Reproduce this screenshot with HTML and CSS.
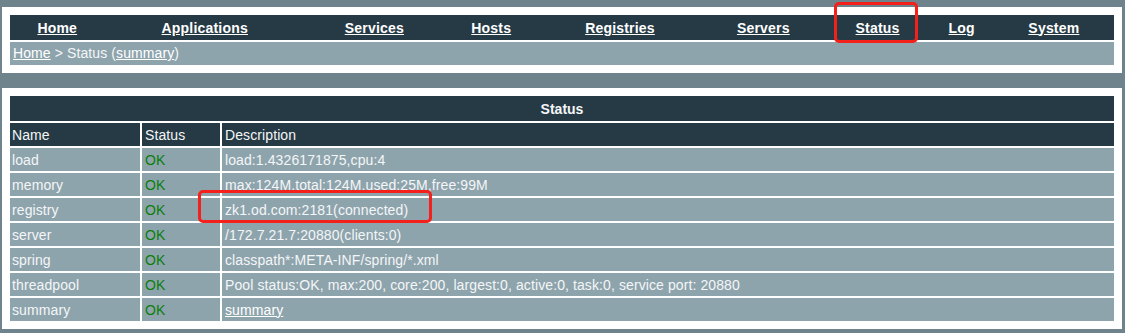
FILE: index.html
```html
<!DOCTYPE html>
<html lang="en">
<head>
    <meta charset="UTF-8">
    <title>Status</title>
    <link rel="stylesheet" href="styles.css">
</head>
<body>
    <div class="panel top-panel">
        <table class="menu">
            <tr>
                <td><a href="#">Home</a></td>
                <td><a href="#">Applications</a></td>
                <td><a href="#">Services</a></td>
                <td><a href="#">Hosts</a></td>
                <td><a href="#">Registries</a></td>
                <td><a href="#">Servers</a></td>
                <td><a href="#">Status</a></td>
                <td><a href="#">Log</a></td>
                <td><a href="#">System</a></td>
            </tr>
        </table>
        <div class="crumbs"><a href="#">Home</a> &gt; Status (<a href="#">summary</a>)</div>
    </div>

    <div class="panel list-panel">
        <table class="list">
            <tr>
                <th colspan="3">Status</th>
            </tr>
            <tr class="head">
                <td class="col-name">Name</td>
                <td class="col-status">Status</td>
                <td>Description</td>
            </tr>
            <tr>
                <td>load</td>
                <td class="ok">OK</td>
                <td>load:1.4326171875,cpu:4</td>
            </tr>
            <tr>
                <td>memory</td>
                <td class="ok">OK</td>
                <td>max:124M,total:124M,used:25M,free:99M</td>
            </tr>
            <tr>
                <td>registry</td>
                <td class="ok">OK</td>
                <td>zk1.od.com:2181(connected)</td>
            </tr>
            <tr>
                <td>server</td>
                <td class="ok">OK</td>
                <td>/172.7.21.7:20880(clients:0)</td>
            </tr>
            <tr>
                <td>spring</td>
                <td class="ok">OK</td>
                <td>classpath*:META-INF/spring/*.xml</td>
            </tr>
            <tr>
                <td>threadpool</td>
                <td class="ok">OK</td>
                <td>Pool status:OK, max:200, core:200, largest:0, active:0, task:0, service port: 20880</td>
            </tr>
            <tr>
                <td>summary</td>
                <td class="ok">OK</td>
                <td><a href="#">summary</a></td>
            </tr>
        </table>
    </div>

    <!-- red marks drawn over the screenshot -->
    <div class="mark mark-menu"></div>
    <div class="mark mark-registry"></div>
</body>
</html>
```

FILE: styles.css
```css
body {
    margin: 0;
    padding: 7px 3px 0 2px;
    background-color: #6e838c;
    font-family: "Liberation Sans", Arial, sans-serif;
    font-size: 14px;
    color: #f4f6f7;
    position: relative;
}

a {
    color: #ffffff;
    text-decoration: underline;
}

.panel {
    background-color: #ffffff;
}

.top-panel {
    padding: 8px;
    margin-bottom: 15px;
}

.list-panel {
    padding: 6px;
}

/* top menu */
.menu {
    width: 100%;
    height: 25px;
    border-collapse: collapse;
    background-color: #263a46;
}

.menu td {
    padding: 0 1px;
    text-align: center;
    font-weight: bold;
    letter-spacing: 0.2px;
    white-space: nowrap;
}

.crumbs {
    margin-top: 2px;
    height: 23px;
    line-height: 23px;
    padding-left: 3px;
    letter-spacing: 0.1px;
    background-color: #8ea4ad;
}

/* status list */
.list {
    width: 100%;
    border-spacing: 2px;
}

.list th {
    height: 25px;
    padding: 0;
    background-color: #263a46;
    font-weight: bold;
    text-align: center;
}

.list td {
    height: 23px;
    padding: 0 3px;
    background-color: #8ea4ad;
    letter-spacing: 0.1px;
    white-space: nowrap;
}

.list .head td {
    background-color: #263a46;
}

.list td:first-child {
    padding-left: 2px;
}

.col-name {
    width: 125px;
}

.col-status {
    width: 72px;
}

.ok {
    color: #0b7d0b;
}

/* annotation boxes */
.mark {
    position: absolute;
    border: 3px solid #f4201c;
    border-radius: 5px;
}

.mark-menu {
    left: 834px;
    top: 2px;
    width: 78px;
    height: 35px;
}

.mark-registry {
    left: 198px;
    top: 190px;
    width: 228px;
    height: 27px;
}
```
